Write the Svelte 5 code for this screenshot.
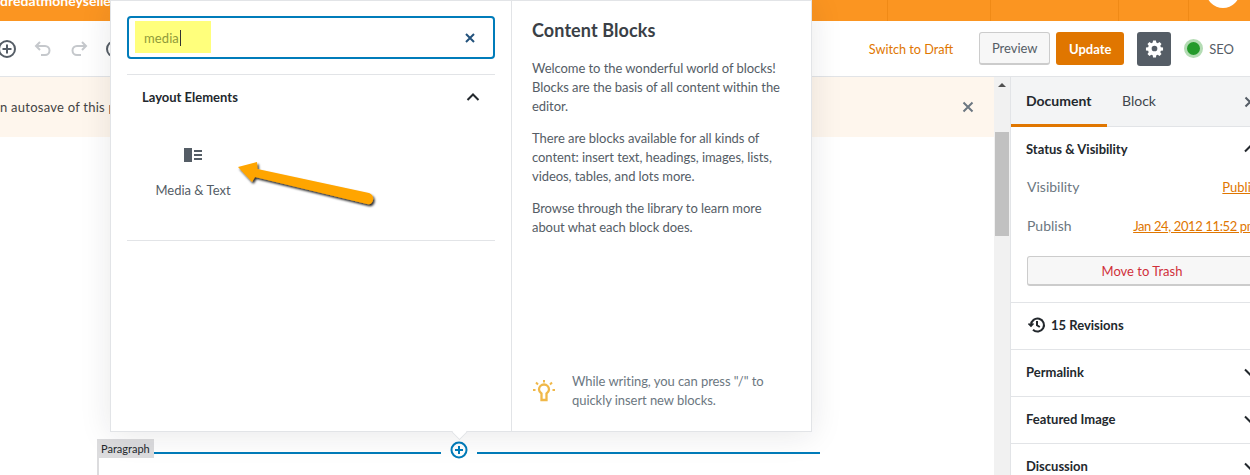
<script lang="ts">
  const panels = ['Permalink', 'Featured Image', 'Discussion'];
  const ticks = [887, 990, 1118, 1188];
</script>

<div class="page">
  <header class="brand">
    <span class="site">dredatmoneyseller</span>
    {#each ticks as x}<i class="tick" style="left:{x}px"></i>{/each}
    <i class="avatar"></i>
  </header>

  <div class="toolbar">
    <div class="tools">
      <svg width="20" height="20" viewBox="0 0 20 20" fill="none" stroke="#555d66" stroke-width="2"><circle cx="10" cy="10" r="8" /><path d="M10 5.500v9M5.500 10h9" /></svg>
      <svg width="20" height="20" viewBox="0 0 20 20" fill="none" stroke="#c5c8cc" stroke-width="2"><path d="M7 3 3 7l4 4M3 7h9a4.500 4.500 0 0 1 0 9H8" /></svg>
      <svg width="20" height="20" viewBox="0 0 20 20" fill="none" stroke="#c5c8cc" stroke-width="2"><path d="m13 3 4 4-4 4M17 7H8a4.500 4.500 0 0 0 0 9h4" /></svg>
      <svg width="20" height="20" viewBox="0 0 20 20" fill="none" stroke="#555d66" stroke-width="2"><circle cx="10" cy="10" r="8" /></svg>
    </div>
    <div class="actions">
      <a class="draft" href="#draft">Switch to Draft</a>
      <button class="preview">Preview</button>
      <button class="update">Update</button>
      <span class="gear">
        <svg width="19" height="19" viewBox="0 0 20 20"><path fill="#fff" fill-rule="evenodd" d="M8.500 1.500h3l.4 2.300 1.500.6 1.900-1.300 2.100 2.100-1.300 1.900.6 1.500 2.300.4v3l-2.300.4-.6 1.500 1.300 1.900-2.100 2.100-1.900-1.300-1.500.6-.4 2.300h-3l-.4-2.300-1.500-.6-1.900 1.300-2.100-2.100 1.300-1.900-.6-1.500-2.300-.4v-3l2.300-.4.600-1.500-1.300-1.900 2.100-2.100 1.900 1.300 1.500-.6zM10 7a3 3 0 1 0 0 6 3 3 0 0 0 0-6z" /></svg>
      </span>
      <span class="seo"><i class="dot"></i>SEO</span>
    </div>
  </div>

  <div class="body">
    <main class="editor">
      <div class="notice">
        <span class="notice-text">n autosave of this post is available</span>
        <svg class="notice-x" width="12" height="12" viewBox="0 0 12 12" stroke="#6c7781" stroke-width="2"><path d="m1.500 1.500 9 9M10.500 1.500l-9 9" /></svg>
      </div>
      <div class="canvas">
        <div class="block">
          <span class="tag">Paragraph</span>
          <span class="rule"></span>
          <svg class="inserter" width="18" height="18" viewBox="0 0 18 18" fill="none" stroke="#007cba" stroke-width="2"><circle cx="9" cy="9" r="7.500" /><path d="M9 5v8M5 9h8" /></svg>
          <span class="rule short"></span>
        </div>
      </div>
    </main>

    <div class="scrollbar">
      <i class="up"></i>
      <i class="thumb"></i>
    </div>

    <aside class="sidebar">
      <div class="tabs">
        <span class="tab active">Document</span>
        <span class="tab">Block</span>
        <svg class="tabs-x" width="12" height="12" viewBox="0 0 12 12" stroke="#555d66" stroke-width="2"><path d="m1.500 1.500 9 9M10.500 1.500l-9 9" /></svg>
      </div>
      <section class="status">
        <div class="row head">
          <strong>Status &amp; Visibility</strong>
          <svg width="14" height="14" viewBox="0 0 14 14" fill="none" stroke="#23282d" stroke-width="2"><path d="m2 9.500 5-5 5 5" /></svg>
        </div>
        <div class="row field"><span>Visibility</span><a href="#vis">Public</a></div>
        <div class="row field"><span>Publish</span><a class="date" href="#date">Jan 24, 2012 11:52 pm</a></div>
        <button class="trash">Move to Trash</button>
      </section>
      <section class="revisions">
        <svg width="18" height="18" viewBox="0 0 18 18" fill="none" stroke="#23282d" stroke-width="2"><path d="M3 9a6.500 6.500 0 1 1 2 4.800M9 5v4.300l2.800 1.700" /><path d="M0.500 7.500 3 10l2.500-2.500" stroke-width="1.600" /></svg>
        <strong>15 Revisions</strong>
      </section>
      {#each panels as name}
        <section class="panel">
          <strong>{name}</strong>
          <svg width="14" height="14" viewBox="0 0 14 14" fill="none" stroke="#23282d" stroke-width="2"><path d="m2 4.500 5 5 5-5" /></svg>
        </section>
      {/each}
    </aside>
  </div>

  <div class="popover">
    <div class="list">
      <div class="search">
        <span class="mark"></span>
        <span class="query">media</span>
        <svg width="10" height="10" viewBox="0 0 10 10" stroke="#23527c" stroke-width="2"><path d="m1 1 8 8M9 1 1 9" /></svg>
      </div>
      <div class="group-head">
        <strong>Layout Elements</strong>
        <svg width="16" height="16" viewBox="0 0 16 16" fill="none" stroke="#23282d" stroke-width="2"><path d="m2.500 11 5.500-5.500 5.500 5.500" /></svg>
      </div>
      <div class="items">
        <div class="item">
          <svg width="18" height="14" viewBox="0 0 18 14" fill="#555d66"><rect width="8" height="14" /><rect x="10" y="2" width="8" height="2" /><rect x="10" y="6" width="8" height="2" /><rect x="10" y="10" width="8" height="2" /></svg>
          <span>Media &amp; Text</span>
        </div>
      </div>
    </div>
    <div class="help">
      <h2>Content Blocks</h2>
      <p>Welcome to the wonderful world of blocks! Blocks are the basis of all content within the editor.</p>
      <p>There are blocks available for all kinds of content: insert text, headings, images, lists, videos, tables, and lots more.</p>
      <p>Browse through the library to learn more about what each block does.</p>
      <div class="tip">
        <svg width="24" height="24" viewBox="0 0 24 24" fill="none" stroke="#f0b849" stroke-width="2"><path d="M9.500 17v-2.500C8 13.500 7 12.200 7 10.500a5 5 0 0 1 10 0c0 1.700-1 3-2.500 4V17v4h-5z" stroke-width="2.300" /><path d="M12 1v2.500M4 3.500 6 5.500M20 3.500l-2 2M1 11h2.500M20.500 11H23" /></svg>
        <span>While writing, you can press "/" to quickly insert new blocks.</span>
      </div>
    </div>
    <i class="caret"></i>
  </div>

  <svg class="arrow" width="150" height="60" viewBox="0 0 150 60">
    <defs>
      <filter id="sh" x="-10%" y="-20%" width="120%" height="140%"><feDropShadow dx="1.500" dy="2" stdDeviation="1" flood-color="#000" flood-opacity="0.85" /></filter>
    </defs>
    <path filter="url(#sh)" fill="#ffa500" d="M8 12 L27 7 L27.500 14 L139 38 Q144 40 143 45 Q142 50 137 49 L25 22 L22 27 Z" />
  </svg>
</div>

<style>
  :global(body) {
    margin: 0;
    overflow: hidden;
  }
  .page {
    position: relative;
    width: 1250px;
    height: 475px;
    overflow: hidden;
    background: #fff;
    font-family: Lato, "Open Sans", sans-serif;
    font-size: 14px;
    color: #23282d;
  }
  .brand {
    position: relative;
    height: 21px;
    background: #fb9521;
    overflow: hidden;
  }
  .site {
    position: absolute;
    left: 0;
    top: -8px;
    color: #fff;
    font-weight: 700;
    font-size: 14px;
  }
  .tick {
    position: absolute;
    top: 0;
    width: 1px;
    height: 21px;
    background: #f08a16;
  }
  .avatar {
    position: absolute;
    left: 1206px;
    top: -26px;
    width: 34px;
    height: 34px;
    border-radius: 50%;
    background: #fff;
  }
  .toolbar {
    height: 55px;
    display: flex;
    align-items: center;
    justify-content: space-between;
    border-bottom: 1px solid #e2e4e7;
    box-sizing: content-box;
  }
  .tools {
    display: flex;
    gap: 16px;
    margin-left: -3px;
  }
  .actions {
    display: flex;
    align-items: center;
    margin-right: 16px;
  }
  .draft {
    color: #e07600;
    text-decoration: none;
    font-size: 12.7px;
    margin-right: 26px;
  }
  button {
    font: inherit;
    box-sizing: border-box;
  }
  .preview {
    width: 71px;
    height: 33px;
    font-size: 13px;
    color: #555d66;
    background: #f7f7f7;
    border: 1px solid #ccc;
    border-bottom-width: 2px;
    border-radius: 3px;
    padding: 0;
    margin-right: 6px;
  }
  .update {
    width: 68px;
    height: 33px;
    font-size: 13px;
    font-weight: 700;
    color: #fff;
    background: #e07600;
    border: 0;
    border-radius: 3px;
    padding: 0;
    margin-right: 13px;
  }
  .gear {
    width: 34px;
    height: 34px;
    display: flex;
    align-items: center;
    justify-content: center;
    background: #555d66;
    border-radius: 3px;
    margin-right: 13px;
  }
  .seo {
    display: flex;
    align-items: center;
    gap: 6px;
    font-size: 13px;
    color: #555d66;
  }
  .dot {
    width: 13px;
    height: 13px;
    border-radius: 50%;
    background: #249a2b;
    border: 3px solid #b4dcb4;
    box-sizing: content-box;
  }
  .body {
    display: flex;
    height: 398px;
  }
  .editor {
    width: 994px;
    flex: none;
  }
  .notice {
    position: relative;
    height: 60px;
    background: #fef6ed;
    display: flex;
    align-items: center;
    justify-content: space-between;
    padding-right: 20px;
    box-sizing: border-box;
    font-size: 13px;
    letter-spacing: 0.25px;
    color: #444;
  }
  .notice-x {
    flex: none;
  }
  .canvas {
    padding: 302px 0 0 97px;
  }
  .block {
    position: relative;
    width: 723px;
    height: 40px;
    display: flex;
    align-items: flex-start;
    border-left: 2px solid #dcdcde;
    box-sizing: border-box;
  }
  .tag {
    height: 19px;
    flex: none;
    background: #dcdcde;
    margin-left: -2px;
    padding-left: 4px;
    font-size: 11px;
    line-height: 20px;
    color: #23282d;
    width: 53px;
  }
  .rule {
    width: 287px;
    height: 2px;
    margin-top: 13px;
    background: #007cba;
    flex: none;
  }
  .rule.short {
    width: 343px;
  }
  .inserter {
    flex: none;
    margin: 2px 9px 0;
  }
  .scrollbar {
    width: 16px;
    flex: none;
    background: #f1f1f1;
    position: relative;
  }
  .up {
    position: absolute;
    left: 4px;
    top: 6px;
    border: 4px solid transparent;
    border-top: 0;
    border-bottom: 4px solid #505050;
  }
  .thumb {
    position: absolute;
    left: 1px;
    top: 55px;
    width: 14px;
    height: 104px;
    background: #c1c1c1;
  }
  .sidebar {
    width: 263px;
    flex: none;
    border-left: 1px solid #e2e4e7;
    box-sizing: border-box;
  }
  .tabs {
    position: relative;
    height: 50px;
    display: flex;
    background: #f3f4f5;
    border-bottom: 1px solid #e2e4e7;
    box-sizing: border-box;
  }
  .tab {
    padding: 0 15px;
    line-height: 48px;
    color: #40464d;
    font-size: 14px;
  }
  .tab.active {
    font-weight: 700;
    color: #23282d;
    height: 47px;
    border-bottom: 3px solid #e07600;
    box-sizing: content-box;
    width: 66px;
  }
  .tabs-x {
    position: absolute;
    left: 233px;
    top: 19px;
  }
  section {
    border-bottom: 1px solid #e2e4e7;
    padding: 0 16px 0 15px;
  }
  strong {
    font-size: 13px;
    font-weight: 700;
    color: #23282d;
  }
  .status {
    height: 176px;
    box-sizing: border-box;
  }
  .row {
    display: flex;
    justify-content: space-between;
    align-items: center;
  }
  .head {
    height: 44px;
    margin-bottom: -4px;
  }
  .field {
    height: 39px;
    padding-left: 1px;
    color: #6c7781;
    font-size: 14px;
  }
  .field a {
    color: #e07600;
    font-size: 13px;
  }
  .field .date {
    letter-spacing: -0.38px;
  }
  .trash {
    display: block;
    width: 230px;
    height: 30px;
    margin: 11px 0 0 1px;
    color: #d0303a;
    background: #f7f7f7;
    border: 1px solid #ccc;
    border-bottom-width: 2px;
    border-radius: 3px;
    font-size: 13px;
    padding: 1px 0 0;
  }
  .revisions {
    height: 47px;
    box-sizing: border-box;
    display: flex;
    align-items: center;
    gap: 5px;
    padding-left: 17px;
    padding-bottom: 2px;
  }
  .panel {
    height: 47px;
    box-sizing: border-box;
    display: flex;
    align-items: center;
    justify-content: space-between;
    padding-bottom: 2px;
  }
  .popover {
    position: absolute;
    left: 110px;
    top: 0;
    width: 702px;
    height: 432px;
    display: flex;
    background: #fff;
    border: 1px solid #e2e4e7;
    box-sizing: border-box;
    box-shadow: 0 3px 30px rgba(25, 30, 35, 0.1);
  }
  .list {
    width: 401px;
    flex: none;
    border-right: 1px solid #e2e4e7;
    padding: 15px 16px 0 16px;
    box-sizing: border-box;
  }
  .search {
    position: relative;
    height: 43px;
    display: flex;
    align-items: center;
    justify-content: space-between;
    border: 2px solid #007cba;
    border-radius: 4px;
    padding: 0 18px 0 15px;
    box-sizing: border-box;
    margin-bottom: 15px;
  }
  .mark {
    position: absolute;
    left: 6px;
    top: 3px;
    width: 76px;
    height: 32px;
    background: #ffff7c;
  }
  .query {
    position: relative;
    font-size: 13px;
    letter-spacing: 0.1px;
    color: #8f9a3a;
    border-right: 1px solid #333;
    padding-right: 1px;
    line-height: 16px;
  }
  .group-head {
    display: flex;
    align-items: center;
    justify-content: space-between;
    height: 44px;
    padding: 0 14px 0 15px;
    border-top: 1px solid #e2e4e7;
  }
  .items {
    height: 122px;
    padding-top: 29px;
    box-sizing: border-box;
    border-bottom: 1px solid #e2e4e7;
  }
  .item {
    width: 132px;
    display: flex;
    flex-direction: column;
    align-items: center;
    gap: 20px;
    font-size: 13px;
    color: #555d66;
  }
  .help {
    flex: 1;
    padding: 18px 20px 0;
    display: flex;
    flex-direction: column;
    color: #555d66;
    font-size: 13px;
    letter-spacing: -0.06px;
    line-height: 19px;
  }
  h2 {
    margin: 0 0 18px;
    font-size: 18px;
    line-height: 22px;
    font-weight: 700;
    letter-spacing: 0.1px;
    color: #3a4046;
  }
  p {
    margin: 0 0 13px;
  }
  .tip {
    margin-top: auto;
    margin-bottom: 21px;
    display: flex;
    align-items: center;
    gap: 16px;
    color: #6c7781;
  }
  .tip svg {
    flex: none;
  }
  .caret {
    position: absolute;
    left: 343px;
    bottom: -7px;
    width: 10px;
    height: 10px;
    background: #fff;
    border-right: 1px solid #e2e4e7;
    border-bottom: 1px solid #e2e4e7;
    transform: rotate(45deg);
  }
  .arrow {
    position: absolute;
    left: 230px;
    top: 155px;
  }
</style>
